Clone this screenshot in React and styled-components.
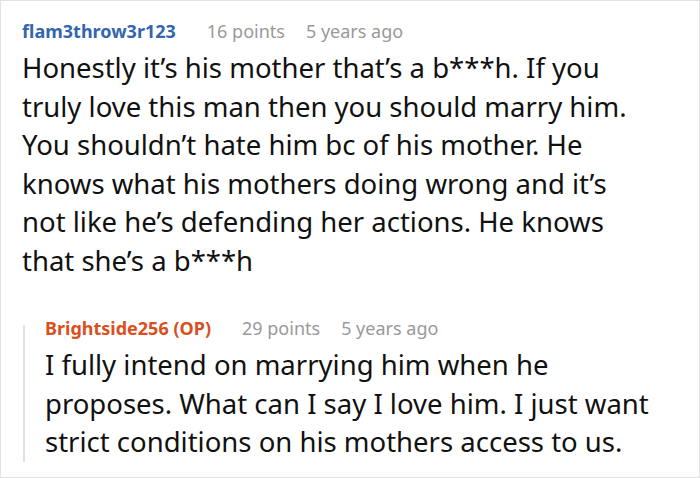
import React from "react";
import styled, { createGlobalStyle } from "styled-components";

const Global = createGlobalStyle`
  html, body { margin: 0; padding: 0; background: #fff; }
  body { font-family: "Noto Sans", "Open Sans", sans-serif; }
`;

const Frame = styled.div`
  box-sizing: border-box;
  width: 700px;
  height: 478px;
  border: 1px solid #e2e2e2;
  padding: 12px 42px 0 21px;
  overflow: hidden;
  background: #fff;
`;

const Meta = styled.div`
  display: flex;
  align-items: baseline;
  gap: 21px;
  font-size: 18px;
  line-height: 36px;
  white-space: nowrap;
`;

const Author = styled.span`
  font-weight: 700;
  color: ${(p) => p.$color};
  margin-right: 10px;
`;

const Info = styled.span`
  color: #999;
`;

const Body = styled.p`
  margin: 0;
  font-size: 27.5px;
  line-height: 38.6px;
  color: #111;
`;

const Reply = styled.div`
  display: flex;
  gap: 20px;
  margin-top: 29.5px;
  margin-left: 1px;
`;

const Rail = styled.div`
  flex: 0 0 2px;
  margin-top: 15px;
  background: #e2e2e2;
`;

const Content = styled.div`
  flex: 1;
  min-width: 0;
`;

function Comment({ author, color, points, time, text }) {
  return (
    <>
      <Meta>
        <Author $color={color}>{author}</Author>
        <Info>{points}</Info>
        <Info>{time}</Info>
      </Meta>
      <Body>{text}</Body>
    </>
  );
}

export default function App() {
  return (
    <Frame>
      <Global />
      <Comment
        author="flam3throw3r123"
        color="#3466ad"
        points="16 points"
        time="5 years ago"
        text="Honestly it’s his mother that’s a b***h. If you truly love this man then you should marry him. You shouldn’t hate him bc of his mother. He knows what his mothers doing wrong and it’s not like he’s defending her actions. He knows that she’s a b***h"
      />
      <Reply>
        <Rail />
        <Content>
          <Comment
            author="Brightside256 (OP)"
            color="#d9501e"
            points="29 points"
            time="5 years ago"
            text="I fully intend on marrying him when he proposes. What can I say I love him. I just want strict conditions on his mothers access to us."
          />
        </Content>
      </Reply>
    </Frame>
  );
}
